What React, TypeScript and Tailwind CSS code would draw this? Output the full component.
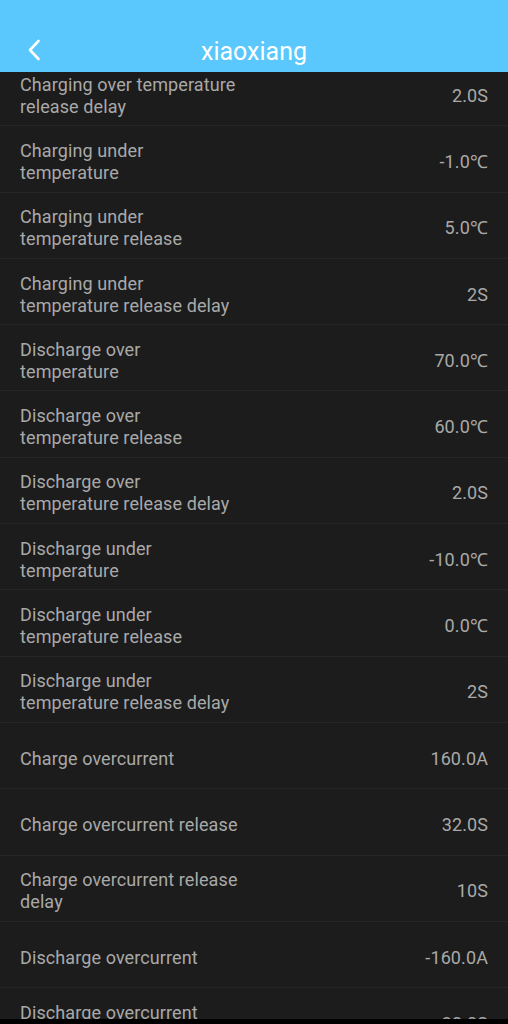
import React from "react";

const rows: { label: string; value: string }[] = [
  { label: "Charging over temperature release delay", value: "2.0S" },
  { label: "Charging under temperature", value: "-1.0℃" },
  { label: "Charging under temperature release", value: "5.0℃" },
  { label: "Charging under temperature release delay", value: "2S" },
  { label: "Discharge over temperature", value: "70.0℃" },
  { label: "Discharge over temperature release", value: "60.0℃" },
  { label: "Discharge over temperature release delay", value: "2.0S" },
  { label: "Discharge under temperature", value: "-10.0℃" },
  { label: "Discharge under temperature release", value: "0.0℃" },
  { label: "Discharge under temperature release delay", value: "2S" },
  { label: "Charge overcurrent", value: "160.0A" },
  { label: "Charge overcurrent release", value: "32.0S" },
  { label: "Charge overcurrent release delay", value: "10S" },
  { label: "Discharge overcurrent", value: "-160.0A" },
  { label: "Discharge overcurrent release", value: "32.0S" },
];

export default function App() {
  return (
    <div className="w-[508px] h-[1024px] flex flex-col bg-black overflow-hidden font-['Roboto','Liberation_Sans',sans-serif]">
      {/* Header */}
      <div className="h-[72px] shrink-0 bg-[#5ac8fc] pt-[28px] relative">
        <div className="h-[44px] flex items-center justify-center">
          <button className="absolute left-[24px] top-[36px] w-[20px] h-[28px] flex items-center justify-center">
            <svg width="14" height="22" viewBox="0 0 14 22" fill="none">
              <path d="M11.5 2 L3 11 L11.5 20" stroke="white" strokeWidth="2.6" strokeLinecap="round" strokeLinejoin="round" />
            </svg>
          </button>
          <span className="text-white text-[25px] leading-none mt-[3px]">xiaoxiang</span>
        </div>
      </div>

      {/* List */}
      <div className="h-[947px] shrink-0 bg-[#1c1c1c] overflow-hidden">
        <div className="-mt-[12px]">
          {rows.map((r, i) => (
            <div key={i} className="h-[66.3px] border-b border-[#262626] flex items-center justify-between pl-[20px] pr-[20px] pt-[6px]">
              <span className="w-[222px] text-[18px] tracking-[0.1px] leading-[22px] text-[#a9a9a9]">{r.label}</span>
              <span className="text-[18px] tracking-[0.1px] leading-[22px] text-[#a9a9a9]">{r.value}</span>
            </div>
          ))}
        </div>
      </div>

      <div className="flex-1 bg-black" />
    </div>
  );
}
